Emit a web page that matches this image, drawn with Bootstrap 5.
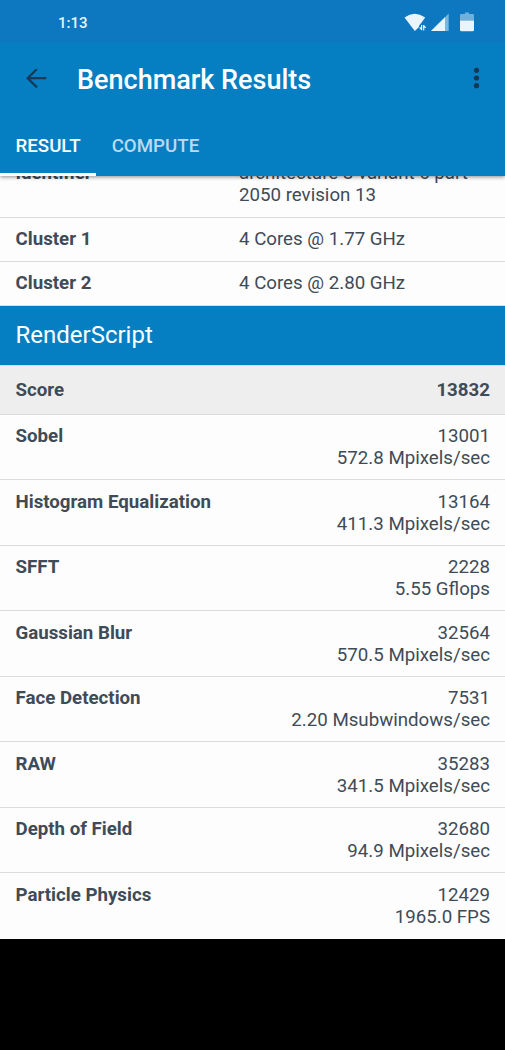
<!DOCTYPE html>
<html lang="en">
<head>
<meta charset="utf-8">
<meta name="viewport" content="width=device-width, initial-scale=1">
<title>Benchmark Results</title>
<link href="https://cdn.jsdelivr.net/npm/bootstrap@5.3.0/dist/css/bootstrap.min.css" rel="stylesheet">
<style>
  :root { --brand: #057fc2; --ink: #3f4b57; }
  body { font-family: Roboto, "Liberation Sans", sans-serif; background: #000; color: var(--ink); font-size: 18.7px; line-height: 21.87px; overflow: hidden; }
  .app { height: 1050px; }
  .status-bar { height: 42px; background: #0d78bf; color: #eaf4fc; font-size: 15px; font-weight: 500; padding: 3px 29px 0 58px; }
  .status-bar .clock { padding-top: 2px; }
  .app-header { background: var(--brand); box-shadow: 0 1px 4px rgba(0,0,0,.45); z-index: 2; }
  .toolbar { height: 74px; padding: 0 20px 0 26px; }
  .toolbar h1 { font-size: 27px; font-weight: 500; line-height: 32px; margin-left: 30px; padding-top: 1px; }
  .tabs { height: 60px; }
  .tabs .nav-link { color: #b9dbf1; font-weight: 500; font-size: 18.7px; border-radius: 0; padding: 20px 15.6px 0 15.5px; height: 60px; border-bottom: 3px solid transparent; }
  .tabs .nav-link.active { color: #fff; border-bottom-color: #fff; background: none; }
  .sheet { background: #fdfdfd; height: 763px; overflow: hidden; }
  .spec-row, .test-row { border-bottom: 1.4px solid #dcdcdc; padding: 0 15px 0 15.5px; }
  .spec-row { height: 43.8px; padding-top: 10.9px; }
  .spec-row.tall { height: 65.6px; margin-top: -23.2px; padding-top: 10.3px; }
  .spec-row .term { width: 223.5px; }
  .section-title { height: 58.6px; background: var(--brand); font-size: 24px; padding: 2px 15px 0 15.5px; color: #fff; }
  .score-row { height: 50px; background: #eee; border-top: 1px solid #dcdcdc; border-bottom: 1px solid #dcdcdc; padding: 2px 15px 0 15.5px; }
  .test-row { height: 65.56px; padding-top: 11.5px; }
  .test-row:last-child { border-bottom: 0; }
</style>
</head>
<body>
<div class="app d-flex flex-column">
  <header class="app-header position-relative flex-shrink-0">
    <div class="status-bar d-flex align-items-center justify-content-between">
      <span class="clock">1:13</span>
      <svg width="72" height="24" viewBox="404 10.5 72 24" fill="#eaf4fc" aria-hidden="true">
        <path d="M404.5 17 Q414.7 9.7 425.2 17 L421.2 22.5 L419.5 24.5 L418.5 27 L414.8 30.5Z"/>
        <path d="M421.6 24.4V29.8M419.6 26.9L421.6 29.2M423.7 30V24.6M425.7 27.4L423.7 25.2" fill="none" stroke="#eaf4fc" stroke-width="1.2"/>
        <path d="M448.7 13V30.5H431Z" opacity=".5"/>
        <path d="M445 16.8V30.5H431Z"/>
        <path d="M460 20V14.8Q460 13.5 461.4 13.5H465V12H469V13.5H472.6Q474 13.5 474 14.8V20Z" opacity=".45"/>
        <path d="M460 20H474V29.2Q474 30.7 472.5 30.7H461.5Q460 30.7 460 29.2Z"/>
      </svg>
    </div>
    <div class="toolbar d-flex align-items-center">
      <svg width="21" height="20" viewBox="0 0 21 20" fill="none" stroke="#163b58" stroke-width="2.3" aria-label="Back"><path d="M20.3 9.2H1.6M11 0L1.6 9.2L11 18.4"/></svg>
      <h1 class="mb-0 text-white">Benchmark Results</h1>
      <svg class="ms-auto" width="18" height="24" viewBox="0 0 18 24" fill="#123852" aria-label="More"><circle cx="9.5" cy="3.3" r="2.6"/><circle cx="9.5" cy="11" r="2.6"/><circle cx="9.5" cy="18.7" r="2.6"/></svg>
    </div>
    <nav class="nav tabs">
      <a class="nav-link active" href="#">RESULT</a>
      <a class="nav-link" href="#">COMPUTE</a>
    </nav>
  </header>
  <main class="sheet flex-shrink-0">
    <div class="spec-row tall d-flex"><div class="term fw-bold">Identifier</div><div>architecture 8 variant 6 part<br>2050 revision 13</div></div>
    <div class="spec-row d-flex"><div class="term fw-bold">Cluster 1</div><div>4 Cores @ 1.77 GHz</div></div>
    <div class="spec-row d-flex"><div class="term fw-bold">Cluster 2</div><div>4 Cores @ 2.80 GHz</div></div>
    <div class="section-title d-flex align-items-center">RenderScript</div>
    <div class="score-row d-flex align-items-center justify-content-between fw-bold"><span>Score</span><span>13832</span></div>
    <div class="test-row d-flex justify-content-between"><div class="fw-bold">Sobel</div><div class="text-end">13001<br>572.8 Mpixels/sec</div></div>
    <div class="test-row d-flex justify-content-between"><div class="fw-bold">Histogram Equalization</div><div class="text-end">13164<br>411.3 Mpixels/sec</div></div>
    <div class="test-row d-flex justify-content-between"><div class="fw-bold">SFFT</div><div class="text-end">2228<br>5.55 Gflops</div></div>
    <div class="test-row d-flex justify-content-between"><div class="fw-bold">Gaussian Blur</div><div class="text-end">32564<br>570.5 Mpixels/sec</div></div>
    <div class="test-row d-flex justify-content-between"><div class="fw-bold">Face Detection</div><div class="text-end">7531<br>2.20 Msubwindows/sec</div></div>
    <div class="test-row d-flex justify-content-between"><div class="fw-bold">RAW</div><div class="text-end">35283<br>341.5 Mpixels/sec</div></div>
    <div class="test-row d-flex justify-content-between"><div class="fw-bold">Depth of Field</div><div class="text-end">32680<br>94.9 Mpixels/sec</div></div>
    <div class="test-row d-flex justify-content-between"><div class="fw-bold">Particle Physics</div><div class="text-end">12429<br>1965.0 FPS</div></div>
  </main>
</div>
<script src="https://cdn.jsdelivr.net/npm/bootstrap@5.3.0/dist/js/bootstrap.bundle.min.js"></script>
</body>
</html>
